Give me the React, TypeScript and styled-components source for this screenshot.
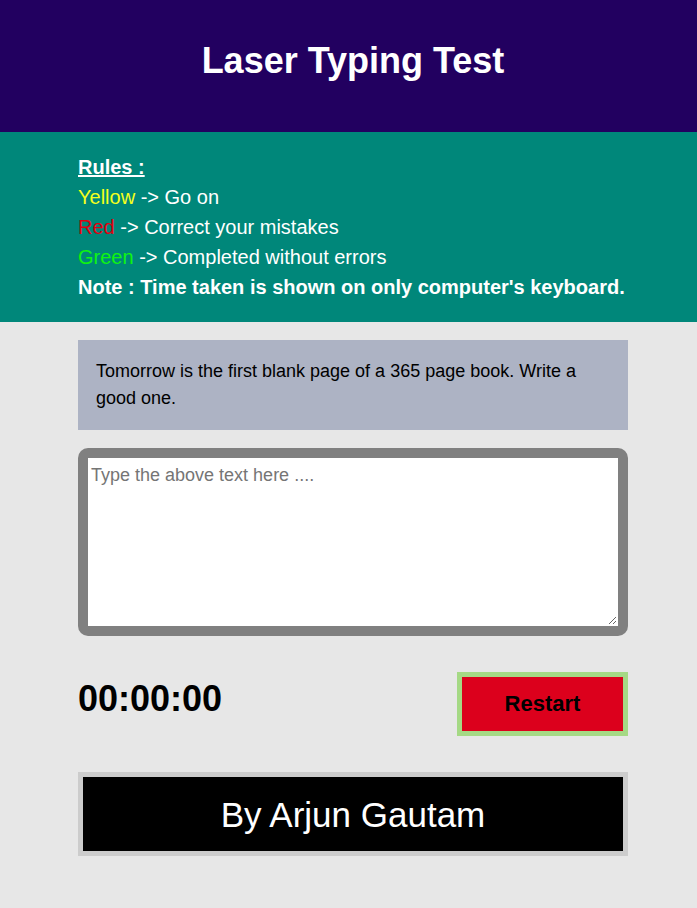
import React from "react";
import styled, { createGlobalStyle } from "styled-components";

const Global = createGlobalStyle`
  html, body { margin: 0; padding: 0; background: #e7e7e7; }
  body { font-family: "Liberation Sans", Arial, sans-serif; }
  * { box-sizing: border-box; }
`;

const Page = styled.div`
  min-height: 908px;
  background: #e7e7e7;
  display: flex;
  flex-direction: column;
`;

const Header = styled.header`
  height: 132px;
  background: #220060;
  display: flex;
  align-items: center;
  justify-content: center;
  padding-left: 9px;
`;

const Title = styled.h1`
  margin: 0 0 10px 0;
  color: #ffffff;
  font-size: 36px;
  font-weight: 700;
  line-height: 1;
`;

const RulesBand = styled.section`
  background: #00877a;
  padding: 20px 0;
`;

const Container = styled.div`
  width: 550px;
  margin-left: 78px;
`;

const RuleLine = styled.div<{ $bold?: boolean; $underline?: boolean }>`
  color: #ffffff;
  font-size: 20px;
  line-height: 30px;
  font-weight: ${(p) => (p.$bold ? 700 : 400)};
  text-decoration: ${(p) => (p.$underline ? "underline" : "none")};
  white-space: nowrap;
`;

const Colored = styled.span<{ $c: string }>`
  color: ${(p) => p.$c};
`;

const Main = styled(Container)`
  display: flex;
  flex-direction: column;
  padding-top: 18px;
`;

const Quote = styled.div`
  background: #adb3c4;
  padding: 18px;
  font-size: 18px;
  line-height: 27px;
  color: #000;
`;

const InputFrame = styled.div`
  margin-top: 18px;
  background: #808080;
  border-radius: 10px;
  padding: 10px 10px 10px 10px;
  display: flex;
`;

const TypeArea = styled.textarea`
  width: 100%;
  height: 168px;
  margin: 0;
  border: 1px solid #ffffff;
  background: #ffffff;
  font-family: "Liberation Sans", Arial, sans-serif;
  font-size: 18px;
  padding: 6px 2px 2px 2px;
  resize: vertical;
  outline: none;
  &::placeholder { color: #757575; }
`;

const ControlRow = styled.div`
  margin-top: 36px;
  display: flex;
  justify-content: space-between;
  align-items: center;
`;

const Timer = styled.div`
  font-size: 36px;
  font-weight: 700;
  color: #000;
  line-height: 1;
  margin-top: -10px;
`;

const RestartButton = styled.button`
  width: 171px;
  height: 64px;
  background: #dc001c;
  border: 5px solid #a5d985;
  font-family: "Liberation Sans", Arial, sans-serif;
  font-size: 22px;
  font-weight: 700;
  color: #000;
  cursor: pointer;
  padding: 0;
`;

const Footer = styled.footer`
  margin-top: 36px;
  height: 84px;
  background: #000;
  border: 5px solid #cccccc;
  display: flex;
  align-items: center;
  justify-content: center;
  color: #fff;
  font-size: 35px;
  padding-top: 2px;
`;

export default function App() {
  return (
    <Page>
      <Global />
      <Header>
        <Title>Laser Typing Test</Title>
      </Header>
      <RulesBand>
        <Container>
          <RuleLine $bold $underline>Rules :</RuleLine>
          <RuleLine><Colored $c="#f4ff1c">Yellow</Colored> -&gt; Go on</RuleLine>
          <RuleLine><Colored $c="#e0000f">Red</Colored> -&gt; Correct your mistakes</RuleLine>
          <RuleLine><Colored $c="#10f410">Green</Colored> -&gt; Completed without errors</RuleLine>
          <RuleLine $bold>Note : Time taken is shown on only computer's keyboard.</RuleLine>
        </Container>
      </RulesBand>
      <Main>
        <Quote>Tomorrow is the first blank page of a 365 page book. Write a good one.</Quote>
        <InputFrame>
          <TypeArea placeholder="Type the above text here ...." />
        </InputFrame>
        <ControlRow>
          <Timer>00:00:00</Timer>
          <RestartButton>Restart</RestartButton>
        </ControlRow>
        <Footer>By Arjun Gautam</Footer>
      </Main>
    </Page>
  );
}
